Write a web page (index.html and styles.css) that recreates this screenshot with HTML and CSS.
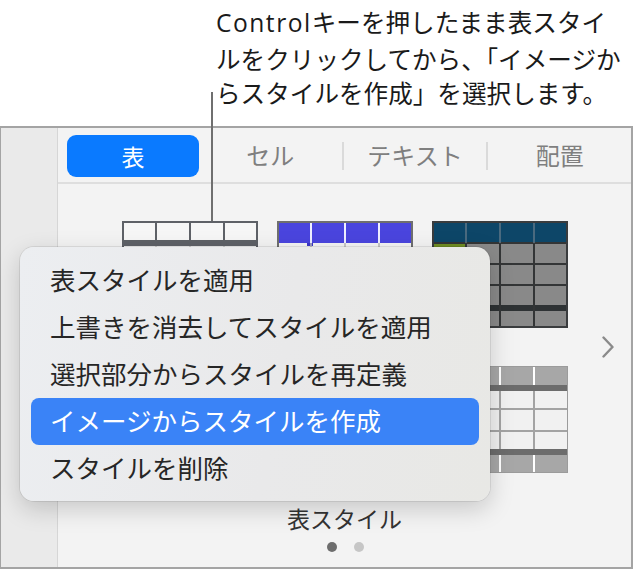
FILE: index.html
```html
<!DOCTYPE html>
<html lang="ja">
<head>
  <meta charset="UTF-8" />
  <title>表スタイル</title>
  <link rel="stylesheet" href="styles.css">
</head>
<body>
  <div class="callout">
    <p class="callout-text"><span class="latin">Control</span>キーを押したまま表スタイ<br>ルをクリックしてから、「イメージか<br>らスタイルを作成」を選択します。</p>
  </div>
  <div class="leader"></div>

  <div class="panel">
    <div class="sidebar"></div>
    <div class="inspector">
      <div class="tabs">
        <div class="tab active">表</div>
        <div class="tab">セル</div>
        <div class="sep"></div>
        <div class="tab">テキスト</div>
        <div class="sep"></div>
        <div class="tab">配置</div>
      </div>

      <div class="styles">
        <div class="grid">
          <!-- 1: white header -->
          <svg width="136" height="107" viewBox="0 0 136 107">
            <rect width="136" height="107" fill="#f6f6f6"/>
            <rect y="19" width="136" height="6" fill="#5e6167"/>
            <path d="M34 0V19M68 0V19M102 0V19" stroke="#5e6167" stroke-width="2"/>
            <path d="M34 25V107M68 25V107M102 25V107M0 45H136M0 65H136M0 85H136" stroke="#c9c9c9" stroke-width="1.5"/>
            <rect x="1" y="1" width="134" height="105" fill="none" stroke="#5e6167" stroke-width="2"/>
          </svg>
          <!-- 2: blue header -->
          <svg width="136" height="107" viewBox="0 0 136 107">
            <rect width="136" height="107" fill="#f4f4f4"/>
            <rect width="136" height="22" fill="#4a45de"/>
            <rect x="30" y="22" width="6" height="3" fill="#3b36c8"/>
            <path d="M34 1V22M68 1V22M102 1V22" stroke="#eeeeff" stroke-width="2"/>
            <path d="M34 22V107M68 22V107M102 22V107M0 44H136M0 65H136M0 86H136" stroke="#b8b8b8" stroke-width="1.5"/>
            <rect x="1" y="1" width="134" height="105" fill="none" stroke="#6f6f6f" stroke-width="2"/>
          </svg>
          <!-- 3: navy header, gray body -->
          <svg width="136" height="107" viewBox="0 0 136 107">
            <rect width="136" height="107" fill="#898989"/>
            <rect width="136" height="22" fill="#0d4668"/>
            <rect y="22" width="34" height="21" fill="#6f8d24"/>
            <rect y="84" width="136" height="6" fill="#2e3234"/>
            <path d="M34 22V107M68 22V107M102 22V107M0 22H136M0 43H136M0 64H136" stroke="#333536" stroke-width="2"/>
            <path d="M34 1V22M68 1V22M102 1V22" stroke="#5f7787" stroke-width="1.5"/>
            <rect x="1" y="1" width="134" height="105" fill="none" stroke="#3a3c3e" stroke-width="2"/>
          </svg>
          <!-- 4 -->
          <svg width="136" height="107" viewBox="0 0 136 107">
            <rect width="136" height="107" fill="#ffffff"/>
            <rect width="136" height="20" fill="#d9d9d9"/>
            <path d="M34 0V107M68 0V107M102 0V107M0 20H136M0 42H136M0 64H136M0 86H136" stroke="#bdbdbd" stroke-width="1.5"/>
            <rect x="1" y="1" width="134" height="105" fill="none" stroke="#9b9b9b" stroke-width="2"/>
          </svg>
          <!-- 5 -->
          <svg width="136" height="107" viewBox="0 0 136 107">
            <rect width="136" height="107" fill="#f2f2f2"/>
            <rect width="136" height="20" fill="#e08a2c"/>
            <path d="M34 0V107M68 0V107M102 0V107M0 20H136M0 42H136M0 64H136M0 86H136" stroke="#c6c6c6" stroke-width="1.5"/>
            <rect x="1" y="1" width="134" height="105" fill="none" stroke="#8f8f8f" stroke-width="2"/>
          </svg>
          <!-- 6: gray header, light body -->
          <svg width="136" height="107" viewBox="0 0 136 107">
            <rect width="136" height="107" fill="#f1f1f1"/>
            <rect width="136" height="19" fill="#a7a7a7"/>
            <rect y="19" width="136" height="6" fill="#6c6c6c"/>
            <rect y="83" width="136" height="6" fill="#6c6c6c"/>
            <rect y="89" width="136" height="18" fill="#a7a7a7"/>
            <path d="M34 25V83M68 25V83M102 25V83M0 43H136M0 65H136" stroke="#a3a3a3" stroke-width="2"/>
            <path d="M34 1V19M68 1V19M102 1V19M34 89V106M68 89V106M102 89V106" stroke="#ffffff" stroke-width="2"/>
            <rect x="0.5" y="0.5" width="135" height="106" fill="none" stroke="#9b9b9b"/>
          </svg>
        </div>
        <svg class="next" width="12" height="22" viewBox="0 0 12 22">
          <path d="M1.5 1.5L10.5 11L1.5 20.5" fill="none" stroke="#8a8a8a" stroke-width="2.4" stroke-linecap="round" stroke-linejoin="round"/>
        </svg>
      </div>

      <div class="label">表スタイル</div>
      <div class="dots">
        <span class="dot on"></span>
        <span class="dot"></span>
      </div>
    </div>
  </div>

  <ul class="menu">
    <li>表スタイルを適用</li>
    <li>上書きを消去してスタイルを適用</li>
    <li>選択部分からスタイルを再定義</li>
    <li class="selected">イメージからスタイルを作成</li>
    <li>スタイルを削除</li>
  </ul>
</body>
</html>
```

FILE: styles.css
```css
body {
  margin: 0;
  width: 633px;
  height: 569px;
  position: relative;
  overflow: hidden;
  background: #fff;
  color: #1a1a1a;
  font-family: "Noto Sans CJK JP", sans-serif;
}

/* callout text at the top */
.callout {
  height: 126px;
  box-sizing: border-box;
  padding: 4px 0 0 216px;
}

.callout-text {
  margin: 0;
  font-size: 24.6px;
  line-height: 34.5px;
  white-space: nowrap;
}

.callout-text .latin {
  font-family: "Open Sans", sans-serif;
  letter-spacing: 1.5px;
}

.leader {
  position: absolute;
  left: 211px;
  top: 92px;
  width: 2px;
  height: 129px;
  background: #6f6f6f;
}

/* inspector panel */
.panel {
  display: flex;
  height: 443px;
  box-sizing: border-box;
  border: 2px solid #a4a4a4;
  border-left-width: 1px;
  background: #f3f3f3;
}

.sidebar {
  width: 56px;
  background: #eaeaea;
  border-right: 1px solid #d6d6d6;
}

.inspector {
  flex: 1;
  display: flex;
  flex-direction: column;
  align-items: center;
}

.tabs {
  align-self: stretch;
  display: flex;
  align-items: center;
  height: 54px;
  border-bottom: 2px solid #dedede;
  padding-left: 9px;
}

.tab {
  flex: 1;
  text-align: center;
  font-size: 24px;
  line-height: 42px;
  color: #7f7f7f;
}

.tab.active {
  flex: none;
  width: 132px;
  height: 42px;
  margin-top: 2px;
  border-radius: 9px;
  background: #0a7aff;
  color: #fff;
  font-size: 23px;
}

.sep {
  width: 2px;
  height: 28px;
  margin-top: 2px;
  background: #dadada;
}

.styles {
  align-self: stretch;
  display: flex;
  align-items: center;
  padding: 37px 0 0 64px;
}

.grid {
  display: grid;
  grid-template-columns: repeat(3, 136px);
  grid-auto-rows: 107px;
  column-gap: 19px;
  row-gap: 38px;
}

.grid svg {
  display: block;
}

.next {
  margin-left: 34px;
  display: block;
}

.label {
  margin-top: 32px;
  font-size: 23px;
  line-height: 26px;
  color: #333;
}

.dots {
  display: flex;
  gap: 17px;
  margin-top: 11px;
  padding-left: 2px;
}

.dot {
  width: 10px;
  height: 10px;
  border-radius: 50%;
  background: #c6c6c6;
}

.dot.on {
  background: #6d6d6d;
}

/* context menu */
.menu {
  position: absolute;
  left: 20px;
  top: 247px;
  width: 470px;
  height: 254px;
  box-sizing: border-box;
  margin: 0;
  padding: 10px 11px 9px;
  list-style: none;
  border-radius: 14px;
  background: linear-gradient(100deg, #eceef1 0%, #e9e9ea 55%, #e8e8e5 100%);
  box-shadow: 0 0 0 1px rgba(0, 0, 0, 0.08), 0 8px 24px rgba(0, 0, 0, 0.18);
}

.menu li {
  height: 47px;
  line-height: 43px;
  padding-left: 19px;
  font-size: 25.5px;
  color: #262626;
  border-radius: 8px;
}

.menu li.selected {
  background: #3a83f7;
  color: #fff;
}
```
